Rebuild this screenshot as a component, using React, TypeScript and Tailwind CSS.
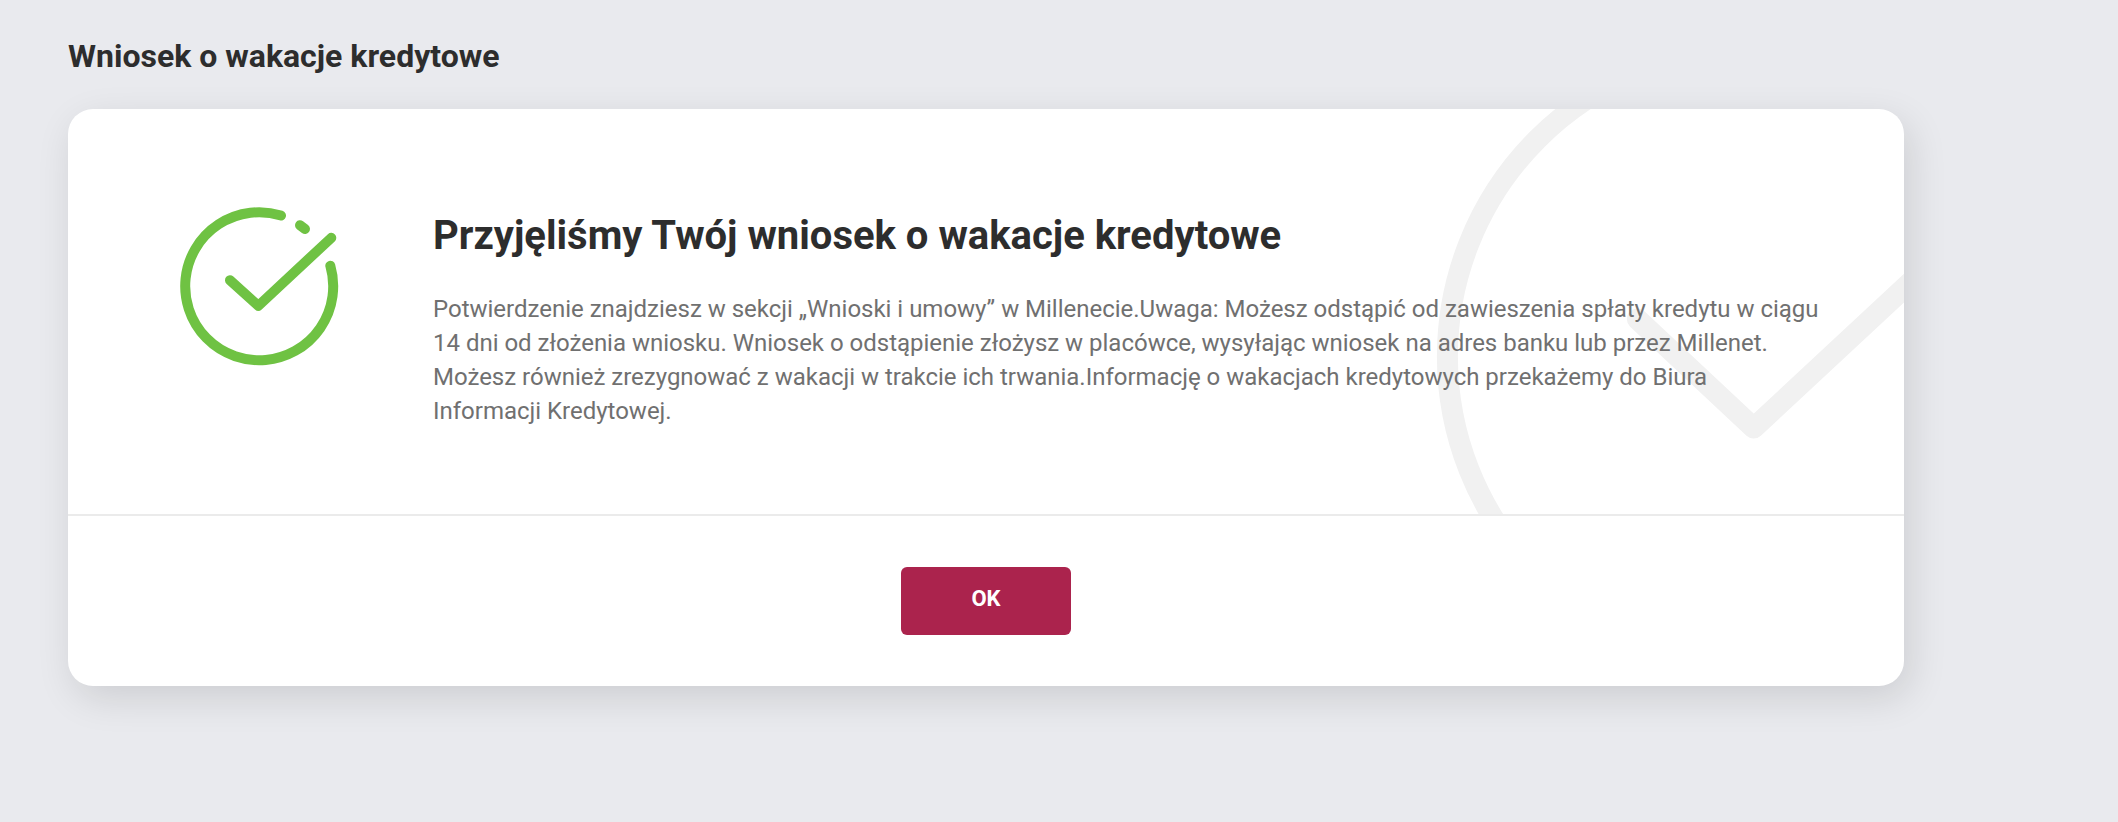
function SuccessIcon() {
    return (
        <svg className="size-40 shrink-0" viewBox="0 0 160 160" fill="none" stroke="#6fc243" strokeWidth="10" strokeLinecap="round" strokeLinejoin="round">
            <path d="M102 9.5A74 74 0 1 0 151.3 59.7" />
            <path d="M121 19.2l5 3.8" />
            <path d="M51 74.2L79.3 99.8L152.3 31.8" />
        </svg>
    );
}

function Watermark() {
    return (
        <svg className="absolute right-0 top-0 h-[405px] w-[480px]" viewBox="0 0 480 405" fill="none" stroke="#f1f1f1" strokeWidth="21" strokeLinecap="round" strokeLinejoin="round">
            <circle cx="330.7" cy="247.5" r="307.3" />
            <path d="M213.3 210L329.7 319L520 142" />
        </svg>
    );
}

export default function App() {
    return (
        <main className="h-screen overflow-hidden bg-[#e9eaee] pl-[68px] font-['Roboto',sans-serif]">
            <h1 className="h-[109px] pt-9 text-[32px] leading-10 font-bold text-[#2d2d2d]">
                Wniosek o wakacje kredytowe
            </h1>
            <section className="w-[1836px] rounded-[25px] bg-white shadow-[6px_12px_38px_rgba(0,0,0,0.12)]">
                <div className="relative flex h-[407px] overflow-hidden rounded-t-[25px] border-b-2 border-[#ebebeb] pt-[97px] pl-[111px]">
                    <Watermark />
                    <SuccessIcon />
                    <div className="relative ml-[94px]">
                        <h2 className="mt-1 text-[40px] leading-[52px] font-bold text-[#2d2d2d]">
                            Przyjęliśmy Twój wniosek o wakacje kredytowe
                        </h2>
                        <p className="mt-[30px] text-2xl leading-[34px] tracking-[-0.01px] whitespace-nowrap text-[#707070]">
                            Potwierdzenie znajdziesz w sekcji „Wnioski i umowy” w Millenecie.Uwaga: Możesz odstąpić od zawieszenia spłaty kredytu w ciągu<br />
                            14 dni od złożenia wniosku. Wniosek o odstąpienie złożysz w placówce, wysyłając wniosek na adres banku lub przez Millenet.<br />
                            Możesz również zrezygnować z wakacji w trakcie ich trwania.Informację o wakacjach kredytowych przekażemy do Biura<br />
                            Informacji Kredytowej.
                        </p>
                    </div>
                </div>
                <div className="flex h-[170px] justify-center pt-[51px]">
                    <button className="h-[68px] w-[170px] rounded-md bg-[#ab234d] pb-1.5 text-[22px] font-bold text-white">
                        OK
                    </button>
                </div>
            </section>
        </main>
    );
}
